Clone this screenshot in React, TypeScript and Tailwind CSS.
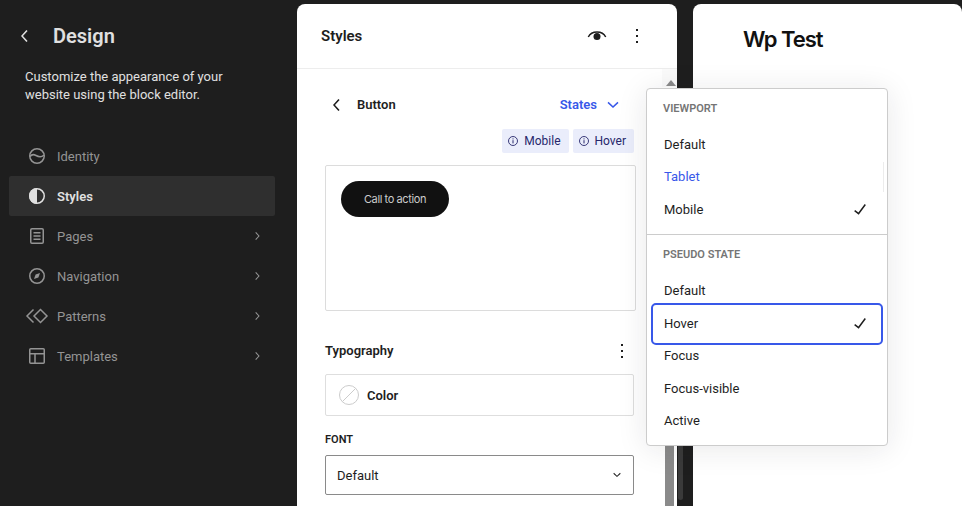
import type { ReactNode } from 'react';

function Icon({ children, size = 24, className = '' }: { children: ReactNode; size?: number; className?: string }) {
  return (
    <svg width={size} height={size} viewBox="0 0 24 24" fill="currentColor" className={`shrink-0 ${className}`}>
      {children}
    </svg>
  );
}

const ChevronLeft = ({ className = '' }: { className?: string }) => (
  <Icon className={className}>
    <path d="M14.6 7l-1.2-1L8 12l5.400 6 1.200-1-4.600-5z" />
  </Icon>
);

const ChevronRight = () => (
  <Icon size={16}>
    <path d="M10.600 6L9.400 7l4.600 5-4.600 5 1.200 1 5.400-6z" />
  </Icon>
);

const MoreVertical = () => (
  <Icon>
    <path d="M13 19h-2v-2h2v2zm0-6h-2v-2h2v2zm0-6h-2V5h2v2z" />
  </Icon>
);

const Check = () => (
  <Icon className="text-[#1e1e1e]">
    <path d="M16.700 7.100l-6.300 8.500-3.300-2.500-.9 1.200 4.500 3.400L17.900 8z" />
  </Icon>
);

const navItems: { label: string; active?: boolean; chevron?: boolean; icon: ReactNode }[] = [
  {
    label: 'Identity',
    icon: (
      <>
        <circle cx="12" cy="12" r="7.250" fill="none" stroke="currentColor" strokeWidth="1.500" />
        <path d="M5 12.500c1.500-2 3.500-2.500 6-1s5 2.500 8-.5" fill="none" stroke="currentColor" strokeWidth="1.500" />
      </>
    ),
  },
  {
    label: 'Styles',
    active: true,
    icon: (
      <>
        <circle cx="12" cy="12" r="7.250" fill="none" stroke="currentColor" strokeWidth="1.500" />
        <path d="M12 4a8 8 0 0 0 0 16z" />
      </>
    ),
  },
  {
    label: 'Pages',
    chevron: true,
    icon: (
      <>
        <rect x="5.750" y="4.750" width="12.500" height="14.500" rx="1.250" fill="none" stroke="currentColor" strokeWidth="1.500" />
        <path d="M8.500 8h7v1.500h-7zM8.500 11.250h7v1.500h-7zM8.500 14.500h7V16h-7z" />
      </>
    ),
  },
  {
    label: 'Navigation',
    chevron: true,
    icon: (
      <>
        <circle cx="12" cy="12" r="7.250" fill="none" stroke="currentColor" strokeWidth="1.500" />
        <path d="M15 9l-1.600 4.400L9 15l1.600-4.400z" />
      </>
    ),
  },
  {
    label: 'Patterns',
    chevron: true,
    icon: (
      <>
        <path d="M8.500 5.500L2 12l6.500 6.500" fill="none" stroke="currentColor" strokeWidth="1.500" />
        <path d="M15.500 5.500L9 12l6.500 6.500L22 12z" fill="none" stroke="currentColor" strokeWidth="1.500" />
      </>
    ),
  },
  {
    label: 'Templates',
    chevron: true,
    icon: (
      <>
        <rect x="4.750" y="4.750" width="14.500" height="14.500" rx="1" fill="none" stroke="currentColor" strokeWidth="1.500" />
        <path d="M5 9.750h14M10 9.750V19" fill="none" stroke="currentColor" strokeWidth="1.500" />
      </>
    ),
  },
];

function Sidebar() {
  return (
    <aside className="-mt-1 w-[297px] shrink-0 pl-[9px] pr-[22px]">
      <div className="flex h-[68px] items-center pl-1 pt-1">
        <ChevronLeft className="text-[#e0e0e0]" />
        <h1 className="ml-4 text-[20px] leading-6 font-semibold text-[#e0e0e0]">Design</h1>
      </div>
      <p className="pl-4 text-[13px] leading-[18px] text-[#e0e0e0]">
        Customize the appearance of your
        <br />
        website using the block editor.
      </p>
      <nav className="mt-[32px] flex flex-col">
        {navItems.map((item) => (
          <div
            key={item.label}
            className={`flex h-10 items-center rounded-[2px] pl-4 pr-[10px] text-[13px] ${
              item.active ? 'bg-[#2f2f2f] font-semibold text-[#e0e0e0]' : 'text-[#949494]'
            }`}
          >
            <Icon>{item.icon}</Icon>
            <span className="ml-2 mt-[2px] flex-1">{item.label}</span>
            {item.chevron && <ChevronRight />}
          </div>
        ))}
      </nav>
    </aside>
  );
}

function Badge({ label }: { label: string }) {
  return (
    <div className="flex h-6 items-center gap-[5px] rounded-[2px] bg-[#eaedfb] pl-[5px] pr-2 text-[12px] text-[#27276b]">
      <svg width="12" height="12" viewBox="0 0 12 12" fill="none" stroke="currentColor">
        <circle cx="6" cy="6" r="4.500" strokeWidth="0.900" />
        <path d="M6 5.200v3.200M6 3.400v1" strokeWidth="1" />
      </svg>
      {label}
    </div>
  );
}

function StylesPanel() {
  return (
    <section className="flex h-[502px] w-[380px] shrink-0 flex-col overflow-hidden rounded-t-[8px] bg-white text-[#1e1e1e]">
      <header className="flex h-[65px] shrink-0 items-center border-b border-[#ededed] pl-6 pr-7">
        <h2 className="flex-1 text-[15px] font-semibold">Styles</h2>
        <div className="flex items-center gap-4">
          <svg width="24" height="24" viewBox="0 0 24 24" fill="currentColor">
            <path d="M3.300 13c1.700-3.400 4.800-5 8.700-5s7 1.600 8.700 5" fill="none" stroke="currentColor" strokeWidth="1.500" />
            <circle cx="12" cy="12.500" r="3.500" />
          </svg>
          <MoreVertical />
        </div>
      </header>
      <div className="flex min-h-0 flex-1">
        <div className="min-w-0 flex-1 pl-7 pr-7">
          <div className="flex h-[72px] items-center pr-[9px]">
            <ChevronLeft />
            <h3 className="ml-[8px] flex-1 text-[13px] font-semibold">Button</h3>
            <span className="text-[13px] font-semibold text-[#3858e9]">States</span>
            <svg width="24" height="24" viewBox="0 0 24 24" fill="currentColor" className="ml-1 text-[#3858e9]">
              <path d="M17.500 10l-1-1.200-4.500 4.200-4.500-4.200-1 1.200 5.500 5z" />
            </svg>
          </div>
          <div className="-mt-[12px] flex justify-end gap-1">
            <Badge label="Mobile" />
            <Badge label="Hover" />
          </div>
          <div className="-mr-[2px] mt-3 h-[146px] rounded-[2px] border border-[#dcdcdc] p-[15px]">
            <div className="flex h-9 w-[108px] items-center justify-center rounded-full bg-[#111111] font-['Inter',sans-serif] text-[11px] tracking-[-0.4px] text-[#cccccc]">
              Call to action
            </div>
          </div>
          <div className="mt-[28px] flex h-6 items-center justify-between">
            <h3 className="text-[13px] font-semibold">Typography</h3>
            <MoreVertical />
          </div>
          <div className="mt-[11px] flex h-[42px] items-center gap-2 rounded-[2px] border border-[#dedede] pl-[13px]">
            <svg width="20" height="20" viewBox="0 0 20 20" fill="none" stroke="#cccccc">
              <circle cx="10" cy="10" r="9.500" />
              <path d="M3.500 16.500L16.500 3.500" />
            </svg>
            <span className="mt-[2px] text-[13px] font-semibold">Color</span>
          </div>
          <label className="mt-[16px] block text-[11px] leading-4 font-semibold uppercase">Font</label>
          <div className="mt-[7px] flex h-10 items-center justify-between rounded-[2px] border border-[#8a8a8a] pl-[11px] pr-2 text-[13px]">
            <span className="mt-[2px]">Default</span>
            <svg width="16" height="16" viewBox="0 0 24 24" fill="currentColor">
              <path d="M17.500 10l-1-1.200-4.500 4.200-4.500-4.200-1 1.200 5.500 5z" />
            </svg>
          </div>
        </div>
        <div className="flex w-[15px] shrink-0 flex-col">
          <div className="flex h-[18px] shrink-0 items-end justify-center bg-[#fafafa] pl-[3px]">
            <div className="mb-[1px] h-0 w-0 border-x-[5px] border-b-[6px] border-x-transparent border-b-[#8a8a8a]" />
          </div>
          <div className="ml-[3px] mt-1 w-[9px] flex-1 rounded-t-[4px] bg-[#8a8a8a]" />
        </div>
      </div>
    </section>
  );
}

function MenuGroup({ title, className, children }: { title: string; className: string; children: ReactNode }) {
  return (
    <div className={className}>
      <div className="h-[39px] pl-4 pt-[1px] text-[11px] leading-[38px] font-semibold text-[#757575] uppercase">{title}</div>
      {children}
    </div>
  );
}

function MenuItem({ label, checked, focused, blue }: { label: string; checked?: boolean; focused?: boolean; blue?: boolean }) {
  return (
    <div className={`relative flex h-[32.5px] items-center justify-between pl-[17px] pr-[15px] text-[13px] ${blue ? 'text-[#3858e9]' : 'text-[#1e1e1e]'}`}>
      {label}
      {checked && <Check />}
      {focused && <div className="absolute inset-x-1 -top-[4px] -bottom-[5.5px] rounded-[5px] border-2 border-[#3858e9]" />}
    </div>
  );
}

function StatesMenu() {
  return (
    <div className="absolute left-[646px] top-[88px] h-[358px] w-[242px] rounded-[4px] border border-[#cccccc] bg-white shadow-[0_3px_30px_rgba(25,30,35,0.1)]">
      <MenuGroup title="Viewport" className="h-[146px] border-b border-[#cccccc]">
        <MenuItem label="Default" />
        <MenuItem label="Tablet" blue />
        <MenuItem label="Mobile" checked />
      </MenuGroup>
      <MenuGroup title="Pseudo state" className="-mb-px">
        <div className="h-[0.65px]" />
        <MenuItem label="Default" />
        <MenuItem label="Hover" checked focused />
        <MenuItem label="Focus" />
        <MenuItem label="Focus-visible" />
        <MenuItem label="Active" />
      </MenuGroup>
      <div className="absolute left-[236px] top-[73px] h-[30px] w-px bg-[#ececec]" />
    </div>
  );
}

export default function App() {
  return (
    <div className="relative flex h-[506px] w-[962px] overflow-hidden bg-[#1e1e1e] pt-1 font-['Roboto',sans-serif]">
      <Sidebar />
      <StylesPanel />
      <div className="flex h-full w-4 shrink-0 flex-col pb-[6px] pl-[1px] pt-[200px]">
        <div className="w-[5px] flex-1 rounded-full bg-[#3a3a3a]" />
      </div>
      <main className="h-[502px] min-w-0 flex-1 rounded-t-[8px] bg-white pl-[50px] pt-[20px]">
        <div className="font-['Inter',sans-serif] text-[22px] leading-[30px] font-semibold tracking-[-1px] text-[#111111]">Wp Test</div>
      </main>
      <StatesMenu />
    </div>
  );
}
